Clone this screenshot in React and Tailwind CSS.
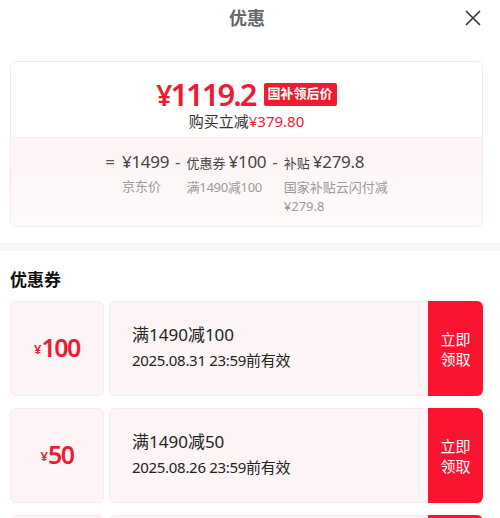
import React from "react";

const CJK = '"Noto Sans", "Noto Sans CJK SC", sans-serif';

function Coupon({ amount, title, date }) {
  return (
    <div className="flex h-[95px] gap-[5px]">
      <div className="w-[94px] shrink-0 rounded-[6px] border border-[#f9e9eb] bg-[#fdf4f5] flex items-center justify-center text-[#ee1b33] pb-[2px]">
        {amount && <span className="text-[13px] font-semibold mt-[5px]">¥</span>}
        {amount && <span className="text-[25px] font-semibold tracking-[-1.5px] leading-none">{amount}</span>}
      </div>
      <div className="flex flex-1 rounded-[6px] overflow-hidden">
        <div className="flex-1 border border-r-0 border-[#f9e9eb] rounded-l-[6px] bg-[#fdf4f5] flex flex-col justify-center pl-[22px] pb-[3px]">
          {title && <div className="text-[17px] leading-[22px] text-[#222]">{title}</div>}
          {date && <div className="text-[15px] leading-[22px] text-[#222] mt-[3px] tracking-[-0.3px]">{date}</div>}
        </div>
        <div className="w-[55px] shrink-0 bg-[#fb1430] flex flex-col items-center justify-center text-white text-[15px] leading-[20px]">
          {title && <span>立即</span>}
          {title && <span>领取</span>}
        </div>
      </div>
    </div>
  );
}

export default function App() {
  return (
    <div className="w-[500px] h-[518px] overflow-hidden bg-white" style={{ fontFamily: CJK }}>
      <div className="relative h-[36px] flex items-center justify-center">
        <span className="text-[18px] font-bold text-[#666] mr-[6px]">优惠</span>
        <svg className="absolute left-[465px] top-[10px]" width="16" height="16" viewBox="0 0 16 16">
          <path d="M1 1 L15 15 M15 1 L1 15" stroke="#333" strokeWidth="1.6" fill="none" />
        </svg>
      </div>

      <div className="pl-[10px] pr-[17px] mt-[25px]">
        <div className="h-[166px] rounded-[6px] border border-[#f2eaea] overflow-hidden flex flex-col">
          <div className="h-[75px] bg-white flex flex-col items-center pt-[16px]">
            <div className="flex items-center h-[32px]">
              <span className="text-[#ee1b33] font-semibold text-[31px] leading-[32px] tracking-[-2px]">
                <span className="text-[28px]">¥</span>1119.2
              </span>
              <span className="ml-[8px] bg-[#f01b2d] text-white text-[13px] font-bold h-[23px] px-[4px] rounded-[2px] flex items-center">
                国补领后价
              </span>
            </div>
            <div className="text-[15px] leading-[20px] text-[#333] mt-[1px]">
              购买立减<span className="text-[#ee1b33]">¥379.80</span>
            </div>
          </div>
          <div className="flex-1 bg-gradient-to-b from-[#fdf4f4] to-[#fefafa] border-t border-[#f8eeee] flex justify-center pt-[12px] pl-[2px]">
            <div className="flex items-start text-[#555]">
              <span className="text-[17px] leading-[24px] mr-[7px]">=</span>
              <div className="flex flex-col">
                <span className="text-[17px] leading-[24px] text-[#444] tracking-[-0.3px]">¥1499</span>
                <span className="text-[13px] leading-[19px] text-[#999] mt-[3px]">京东价</span>
              </div>
              <span className="text-[17px] leading-[24px] mx-[6px]">-</span>
              <div className="flex flex-col">
                <span className="leading-[24px] text-[#444]">
                  <span className="text-[13px]">优惠券</span>
                  <span className="text-[17px] ml-[3px] tracking-[-0.3px]">¥100</span>
                </span>
                <span className="text-[13px] leading-[19px] text-[#999] mt-[3px] tracking-[-0.3px]">满1490减100</span>
              </div>
              <span className="text-[17px] leading-[24px] mx-[6px]">-</span>
              <div className="flex flex-col w-[106px]">
                <span className="leading-[24px] text-[#444] whitespace-nowrap">
                  <span className="text-[13px]">补贴</span>
                  <span className="text-[17px] ml-[3px] tracking-[-0.3px]">¥279.8</span>
                </span>
                <span className="text-[13px] leading-[19px] text-[#999] mt-[3px]">国家补贴云闪付减¥279.8</span>
              </div>
            </div>
          </div>
        </div>
      </div>

      <div className="h-[8px] bg-[#f5f7fb] mt-[16px]" />

      <div className="pl-[10px] pr-[17px]">
        <div className="text-[17px] font-bold text-[#111] leading-[24px] mt-[17px]">优惠券</div>
        <div className="mt-[9px] flex flex-col gap-[12px]">
          <Coupon amount="100" title="满1490减100" date="2025.08.31 23:59前有效" />
          <Coupon amount="50" title="满1490减50" date="2025.08.26 23:59前有效" />
          <Coupon />
        </div>
      </div>
    </div>
  );
}
